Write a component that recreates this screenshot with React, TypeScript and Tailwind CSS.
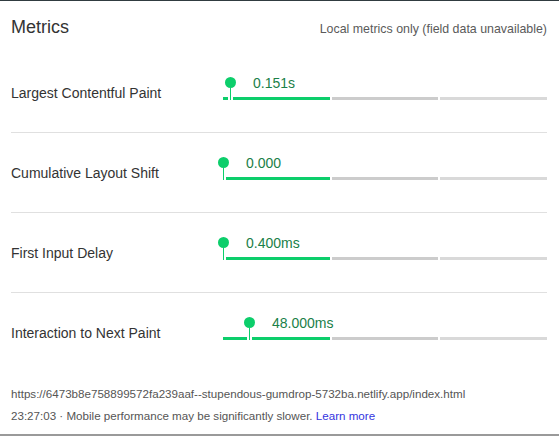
import React from 'react';

interface Metric {
  label: string;
  value: string;
  // x of the marker line inside the bar, px
  pos: number;
}

const metrics: Metric[] = [
  { label: 'Largest Contentful Paint', value: '0.151s', pos: 7 },
  { label: 'Cumulative Layout Shift', value: '0.000', pos: 0 },
  { label: 'First Input Delay', value: '0.400ms', pos: 0 },
  { label: 'Interaction to Next Paint', value: '48.000ms', pos: 26 },
];

function MetricRow({ metric, last }: { metric: Metric; last: boolean }) {
  return (
    <div
      className={
        'flex h-[80px] ' + (last ? '' : 'border-b border-[#e0e0e0]')
      }
    >
      <div className="w-[212px] self-center text-[14px] leading-[20px] text-[#333]">
        {metric.label}
      </div>
      <div className="relative w-[324px] pt-[20px]">
        <div
          className="h-[20px] text-[14px] leading-[20px] text-[#1a8048]"
          style={{ paddingLeft: metric.pos + 23 }}
        >
          {metric.value}
        </div>
        <div className="mt-[4px] flex h-[3px] gap-[2px]">
          <div className="w-[107px] bg-[#0cce6b]" />
          <div className="w-[106px] bg-[#cccccc]" />
          <div className="w-[107px] bg-[#d9d9d9]" />
        </div>
        <div
          className="absolute top-[24px] flex w-[11px] flex-col items-center"
          style={{ left: metric.pos - 5 }}
        >
          <div className="h-[11px] w-[11px] rounded-full bg-[#0cce6b]" />
          <div className="h-[12px] w-[5px] border-x-2 border-white bg-[#0cce6b]" />
        </div>
      </div>
    </div>
  );
}

export default function App() {
  return (
    <div
      className="h-[436px] w-[559px] overflow-hidden border-t border-b-2 border-t-[#303b40] border-b-[#9a9a9a] bg-white"
      style={{ fontFamily: '"Liberation Sans", Arial, sans-serif' }}
    >
      <div className="flex items-baseline justify-between px-[11px] pt-[14px] pb-[14px] pr-[12px]">
        <div className="text-[18px] leading-[24px] text-[#333]">Metrics</div>
        <div className="text-[12.4px] text-[#5a5a5a]">
          Local metrics only (field data unavailable)
        </div>
      </div>

      <div className="mx-[11px] w-[536px]">
        {metrics.map((m, i) => (
          <MetricRow key={m.label} metric={m} last={i === metrics.length - 1} />
        ))}
      </div>

      <div className="px-[11px] pt-[10px] text-[11.6px] leading-[22px] text-[#555]">
        <div>
          https://6473b8e758899572fa239aaf--stupendous-gumdrop-5732ba.netlify.app/index.html
        </div>
        <div>
          23:27:03 · Mobile performance may be significantly slower.{' '}
          <span className="text-[#3434e0]">Learn more</span>
        </div>
      </div>
    </div>
  );
}
